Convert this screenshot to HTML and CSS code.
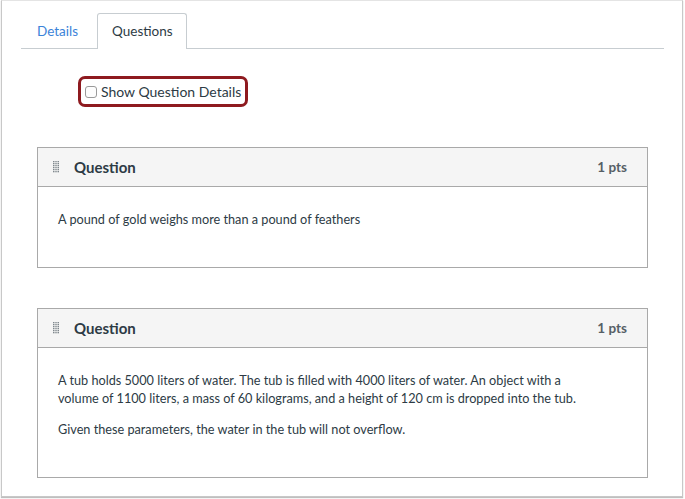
FILE: index.html
```html
<!DOCTYPE html>
<html lang="en">
<head>
<meta charset="utf-8">
<title>Quiz Questions</title>
<link rel="stylesheet" href="styles.css">
</head>
<body>
<div class="window">
  <div class="content">
    <ul class="tabs">
      <li class="tab"><a href="#" class="tab-link">Details</a></li>
      <li class="tab tab-active"><a href="#" class="tab-link">Questions</a></li>
    </ul>

    <div class="options">
      <label class="show-details">
        <input type="checkbox" class="checkbox">
        <span>Show Question Details</span>
      </label>
    </div>

    <div class="question">
      <div class="question-header">
        <svg class="handle" width="6" height="12" viewBox="0 0 6 12" aria-hidden="true">
          <g fill="#7f878d">
            <rect x="0" y="0" width="6" height="1.3"/>
            <rect x="0" y="2" width="6" height="1.3"/>
            <rect x="0" y="4" width="6" height="1.3"/>
            <rect x="0" y="6" width="6" height="1.3"/>
            <rect x="0" y="8" width="6" height="1.3"/>
            <rect x="0" y="10" width="6" height="1.3"/>
          </g>
          <g fill="#f5f5f5">
            <rect x="1.5" y="0" width="0.8" height="12"/>
            <rect x="3.7" y="0" width="0.8" height="12"/>
          </g>
        </svg>
        <span class="question-title">Question</span>
        <span class="question-points">1 pts</span>
      </div>
      <div class="question-body">
        <p>A pound of gold weighs more than a pound of feathers</p>
      </div>
    </div>

    <div class="question">
      <div class="question-header">
        <svg class="handle" width="6" height="12" viewBox="0 0 6 12" aria-hidden="true">
          <g fill="#7f878d">
            <rect x="0" y="0" width="6" height="1.3"/>
            <rect x="0" y="2" width="6" height="1.3"/>
            <rect x="0" y="4" width="6" height="1.3"/>
            <rect x="0" y="6" width="6" height="1.3"/>
            <rect x="0" y="8" width="6" height="1.3"/>
            <rect x="0" y="10" width="6" height="1.3"/>
          </g>
          <g fill="#f5f5f5">
            <rect x="1.5" y="0" width="0.8" height="12"/>
            <rect x="3.7" y="0" width="0.8" height="12"/>
          </g>
        </svg>
        <span class="question-title">Question</span>
        <span class="question-points">1 pts</span>
      </div>
      <div class="question-body">
        <p>A tub holds 5000 liters of water. The tub is filled with 4000 liters of water. An object with a volume of 1100 liters, a mass of 60 kilograms, and a height of 120 cm is dropped into the tub.</p>
        <p>Given these parameters, the water in the tub will not overflow.</p>
      </div>
    </div>
  </div>
</div>
</body>
</html>
```

FILE: styles.css
```css
* { box-sizing: border-box; }

html, body {
  margin: 0;
  padding: 0;
  background: #ffffff;
}

body {
  font-family: Lato, "Open Sans", "Liberation Sans", sans-serif;
  color: #2d3b45;
  width: 685px;
  height: 499px;
  overflow: hidden;
}

.window {
  margin: 0 2px 0 1px;
  height: 497px;
  background: #ffffff;
  border: 1px solid #c8c8c8;
  border-top-color: #e4e4e4;
  box-shadow: 0 1px 1px rgba(0, 0, 0, 0.25);
}

.content {
  padding: 12px 18px 0 19px;
}

.tabs {
  list-style: none;
  margin: 0;
  padding: 0;
  display: flex;
  border-bottom: 1px solid #c7cdd1;
}

.tab {
  margin-right: 3px;
  border: 1px solid transparent;
  border-bottom: none;
  border-radius: 3px 3px 0 0;
  margin-bottom: -1px;
  height: 36px;
}

.tab-link {
  display: block;
  padding: 0 15px;
  line-height: 34px;
  font-size: 13.5px;
  color: #3b83d9;
  text-decoration: none;
}

.tab-active {
  border-color: #c7cdd1;
  background: #ffffff;
}

.tab-active .tab-link {
  color: #2d3b45;
  padding: 0 13px 0 14px;
}

.options {
  padding: 27px 0 0 57px;
}

.show-details {
  display: inline-flex;
  align-items: center;
  height: 31px;
  padding: 0 4px 0 3px;
  border: 3px solid #8e1a1f;
  border-radius: 7px;
  font-size: 14px;
  color: #2d3b45;
}

.checkbox {
  appearance: none;
  -webkit-appearance: none;
  width: 12px;
  height: 12px;
  margin: 0 4px 0 1px;
  border: 1px solid #9a9a9a;
  border-radius: 3px;
  background: #fdfdfd;
}

.question {
  margin: 40px 16px 0 16px;
  border: 1px solid #a9a9a9;
}

.question + .question {
  margin-top: 40px;
}

.question-header {
  display: flex;
  align-items: center;
  height: 39px;
  padding: 0 20px 0 15px;
  background: #f5f5f5;
  border-bottom: 1px solid #a9a9a9;
}

.handle {
  display: block;
  margin-right: 15px;
}

.question-title {
  font-weight: 700;
  font-size: 15px;
  color: #2d3b45;
}

.question-points {
  margin-left: auto;
  font-weight: 700;
  font-size: 13.5px;
  color: #565f66;
}

.question-body {
  padding: 23px 50px 39px 20px;
  font-size: 12.7px;
  line-height: 18px;
  color: #2d3b45;
}

.question-body p {
  margin: 0;
}

.question-body p + p {
  margin-top: 13px;
}
```
